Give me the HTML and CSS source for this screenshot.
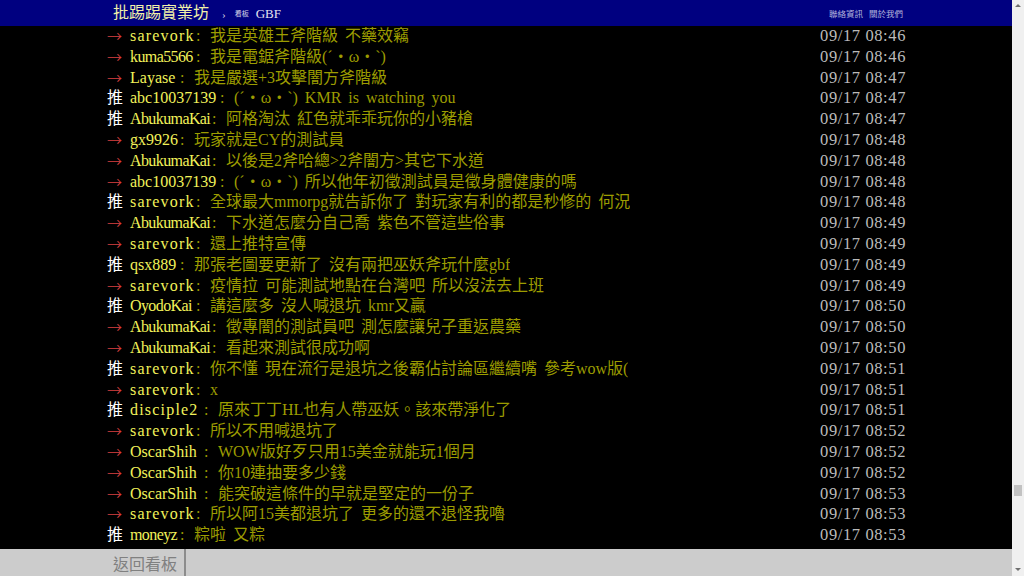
FILE: index.html
```html
<!DOCTYPE html>
<html lang="zh-Hant-TW">
	<head>
		<meta charset="UTF-8" />
		<meta name="viewport" content="width=device-width, initial-scale=1.0" />
		<title>[閒聊] GBF - 看板 GBF - 批踢踢實業坊</title>
		<link rel="stylesheet" href="styles.css">
	</head>

	<body>
		<div class="page">
			<div class="topbar">
				<div class="bar-inner">
					<a class="logo">批踢踢實業坊</a>
					<span class="crumb">›</span>
					<a class="board"><span class="board-label">看板</span>GBF</a>
					<div class="right">
						<a>聯絡資訊</a>
						<a>關於我們</a>
					</div>
				</div>
			</div>

			<div class="main">
				<div class="comments">
					<div class="push"><span class="tag arrow">→</span><span class="userid wide" style="width:8ch">sarevork</span><span class="colon">:</span><span class="content">我是英雄王斧階級 不藥效竊</span><span class="time">09/17 08:46</span></div>
					<div class="push"><span class="tag arrow">→</span><span class="userid tight" style="width:8ch">kuma5566</span><span class="colon">:</span><span class="content">我是電鋸斧階級(´・ω・`)</span><span class="time">09/17 08:46</span></div>
					<div class="push"><span class="tag arrow">→</span><span class="userid" style="width:6ch">Layase</span><span class="colon">:</span><span class="content">我是嚴選+3攻擊闇方斧階級</span><span class="time">09/17 08:47</span></div>
					<div class="push"><span class="tag">推</span><span class="userid" style="width:11ch">abc10037139</span><span class="colon">:</span><span class="content">(´・ω・`) KMR is watching you</span><span class="time">09/17 08:47</span></div>
					<div class="push"><span class="tag">推</span><span class="userid tight" style="width:10ch">AbukumaKai</span><span class="colon">:</span><span class="content">阿格淘汰 紅色就乖乖玩你的小豬槍</span><span class="time">09/17 08:47</span></div>
					<div class="push"><span class="tag arrow">→</span><span class="userid" style="width:6ch">gx9926</span><span class="colon">:</span><span class="content">玩家就是CY的測試員</span><span class="time">09/17 08:48</span></div>
					<div class="push"><span class="tag arrow">→</span><span class="userid tight" style="width:10ch">AbukumaKai</span><span class="colon">:</span><span class="content">以後是2斧哈總&gt;2斧闇方&gt;其它下水道</span><span class="time">09/17 08:48</span></div>
					<div class="push"><span class="tag arrow">→</span><span class="userid" style="width:11ch">abc10037139</span><span class="colon">:</span><span class="content">(´・ω・`) 所以他年初徵測試員是徵身體健康的嗎</span><span class="time">09/17 08:48</span></div>
					<div class="push"><span class="tag">推</span><span class="userid wide" style="width:8ch">sarevork</span><span class="colon">:</span><span class="content">全球最大mmorpg就告訴你了 對玩家有利的都是秒修的 何況</span><span class="time">09/17 08:48</span></div>
					<div class="push"><span class="tag arrow">→</span><span class="userid tight" style="width:10ch">AbukumaKai</span><span class="colon">:</span><span class="content">下水道怎麼分自己喬 紫色不管這些俗事</span><span class="time">09/17 08:49</span></div>
					<div class="push"><span class="tag arrow">→</span><span class="userid wide" style="width:8ch">sarevork</span><span class="colon">:</span><span class="content">還上推特宣傳</span><span class="time">09/17 08:49</span></div>
					<div class="push"><span class="tag">推</span><span class="userid" style="width:6ch">qsx889</span><span class="colon">:</span><span class="content">那張老圖要更新了 沒有兩把巫妖斧玩什麼gbf</span><span class="time">09/17 08:49</span></div>
					<div class="push"><span class="tag arrow">→</span><span class="userid wide" style="width:8ch">sarevork</span><span class="colon">:</span><span class="content">疫情拉 可能測試地點在台灣吧 所以沒法去上班</span><span class="time">09/17 08:49</span></div>
					<div class="push"><span class="tag">推</span><span class="userid tight" style="width:8ch">OyodoKai</span><span class="colon">:</span><span class="content">講這麼多 沒人喊退坑 kmr又贏</span><span class="time">09/17 08:50</span></div>
					<div class="push"><span class="tag arrow">→</span><span class="userid tight" style="width:10ch">AbukumaKai</span><span class="colon">:</span><span class="content">徵專闇的測試員吧 測怎麼讓兒子重返農藥</span><span class="time">09/17 08:50</span></div>
					<div class="push"><span class="tag arrow">→</span><span class="userid tight" style="width:10ch">AbukumaKai</span><span class="colon">:</span><span class="content">看起來測試很成功啊</span><span class="time">09/17 08:50</span></div>
					<div class="push"><span class="tag">推</span><span class="userid wide" style="width:8ch">sarevork</span><span class="colon">:</span><span class="content">你不懂 現在流行是退坑之後霸佔討論區繼續嘴 參考wow版(</span><span class="time">09/17 08:51</span></div>
					<div class="push"><span class="tag arrow">→</span><span class="userid wide" style="width:8ch">sarevork</span><span class="colon">:</span><span class="content">x</span><span class="time">09/17 08:51</span></div>
					<div class="push"><span class="tag">推</span><span class="userid wide" style="width:9ch">disciple2</span><span class="colon">:</span><span class="content">原來丁丁HL也有人帶巫妖。該來帶淨化了</span><span class="time">09/17 08:51</span></div>
					<div class="push"><span class="tag arrow">→</span><span class="userid wide" style="width:8ch">sarevork</span><span class="colon">:</span><span class="content">所以不用喊退坑了</span><span class="time">09/17 08:52</span></div>
					<div class="push"><span class="tag arrow">→</span><span class="userid" style="width:9ch">OscarShih</span><span class="colon">:</span><span class="content">WOW版好歹只用15美金就能玩1個月</span><span class="time">09/17 08:52</span></div>
					<div class="push"><span class="tag arrow">→</span><span class="userid" style="width:9ch">OscarShih</span><span class="colon">:</span><span class="content">你10連抽要多少錢</span><span class="time">09/17 08:52</span></div>
					<div class="push"><span class="tag arrow">→</span><span class="userid" style="width:9ch">OscarShih</span><span class="colon">:</span><span class="content">能突破這條件的早就是堅定的一份子</span><span class="time">09/17 08:53</span></div>
					<div class="push"><span class="tag arrow">→</span><span class="userid wide" style="width:8ch">sarevork</span><span class="colon">:</span><span class="content">所以阿15美都退坑了 更多的還不退怪我嚕</span><span class="time">09/17 08:53</span></div>
					<div class="push"><span class="tag">推</span><span class="userid tight" style="width:6ch">moneyz</span><span class="colon">:</span><span class="content">粽啦 又粽</span><span class="time">09/17 08:53</span></div>
				</div>
			</div>

			<div class="navigation">
				<div class="bar-inner">
					<a class="back">返回看板</a>
					<span class="divider"></span>
				</div>
			</div>
		</div>

		<!-- fake scrollbar, the page itself does not scroll -->
		<div class="scrollbar">
			<span class="up"></span>
			<span class="thumb"></span>
			<span class="down"></span>
		</div>
	</body>
</html>
```

FILE: styles.css
```css
html,
body {
	height: 100%;
	overflow: hidden;
}

body {
	margin: 0;
	display: flex;
	background: #000;
	font-family: "Liberation Serif", "Noto Sans CJK TC", serif;
	font-size: 16px;
}

a {
	text-decoration: none;
	cursor: pointer;
}

.page {
	flex: 1;
	display: flex;
	flex-direction: column;
	min-width: 0;
}

.bar-inner {
	width: 800px;
	margin: 0 auto;
	display: flex;
	align-items: center;
	height: 100%;
}

/* top bar */
.topbar {
	height: 26px;
	background: #000080;
	flex-shrink: 0;
}

.topbar .bar-inner {
	padding-left: 7px;
	padding-right: 3px;
	box-sizing: border-box;
}

.logo {
	color: #f0f0a8;
	font-size: 16px;
	line-height: 20px;
}

.crumb {
	color: #c8c8e0;
	font-size: 11px;
	margin: 1px 9px 0 13px;
}

.board {
	color: #e4e4f0;
	font-size: 13px;
	margin-top: 2px;
}

.board-label {
	font-size: 7px;
	vertical-align: 2px;
	color: #d8d8e8;
	margin-right: 7px;
}

.right {
	margin-left: auto;
	display: flex;
	gap: 6px;
}

.right a {
	color: #b4b4dc;
	font-size: 8.5px;
}

/* comments */
.main {
	flex: 1;
	overflow: hidden;
}

.comments {
	width: 800px;
	margin: 0 auto;
}

.push {
	display: flex;
	height: 20.8px;
	line-height: 20.8px;
	white-space: nowrap;
}

.tag {
	width: 24px;
	flex-shrink: 0;
	color: #fff;
	padding-left: 1px;
	box-sizing: border-box;
}

.tag.arrow {
	color: #d84040;
	font-family: "Open Sans", "Noto Sans CJK TC", sans-serif;
	font-size: 15px;
	font-weight: 300;
}

.userid {
	display: inline-block;
	flex-shrink: 0;
	color: #f2f25a;
}

.userid.wide {
	letter-spacing: 1.2px;
}

.userid.tight {
	letter-spacing: -0.6px;
}

.colon {
	display: inline-block;
	width: 16px;
	flex-shrink: 0;
	color: #9c9c00;
	padding-left: 2px;
	box-sizing: border-box;
}

.content {
	color: #9c9c00;
	word-spacing: 3px;
	overflow: hidden;
}

.time {
	margin-left: auto;
	padding-left: 8px;
	color: #bbb;
	font-size: 16.5px;
	letter-spacing: 0.6px;
}

/* bottom navigation */
.navigation {
	height: 27px;
	background: #ccc;
	flex-shrink: 0;
}

.back {
	color: #808080;
	font-size: 16px;
	padding-left: 7px;
}

.divider {
	width: 2px;
	height: 100%;
	background: #8c8c8c;
	margin-left: 7px;
}

/* scrollbar */
.scrollbar {
	width: 12px;
	flex-shrink: 0;
	background: #f0f0f0;
	display: flex;
	flex-direction: column;
	align-items: center;
}

.up,
.down {
	width: 0;
	height: 0;
	border-left: 3px solid transparent;
	border-right: 3px solid transparent;
}

.up {
	border-bottom: 3px solid #707070;
	margin-top: 4px;
}

.thumb {
	width: 8px;
	height: 11px;
	background: #c2c2c2;
	margin-top: 478px;
}

.down {
	border-top: 3px solid #707070;
	margin-top: auto;
	margin-bottom: 5px;
}
```
